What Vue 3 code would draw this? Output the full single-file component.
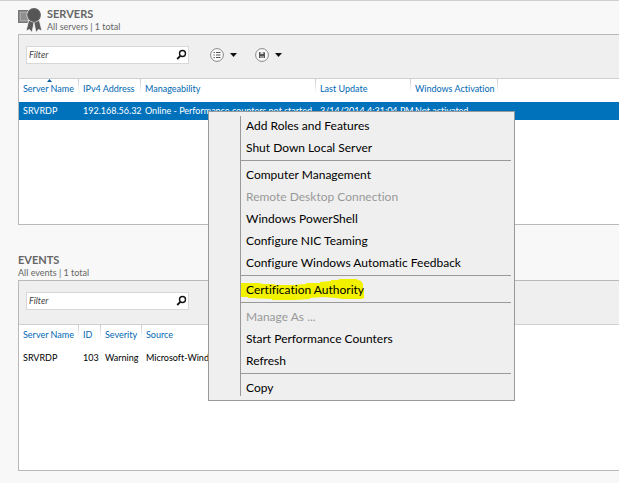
<template>
    <main class="dashboard">
        <section v-for="panel in panels" :key="panel.id" class="group" :class="panel.id">
            <header class="group-header">
                <svg v-if="panel.id === 'servers'" class="group-icon" width="26" height="26" viewBox="0 0 26 26" aria-hidden="true">
                    <rect x="0.5" y="3.5" width="14" height="12" fill="#8a8a8a" stroke="#777" />
                    <rect x="2.5" y="5.5" width="10" height="8" fill="#8f8f8f" stroke="#a8a8a8" />
                    <path d="M11 12L8 24L11.500 22.500L14 25.500L16 16L18 25.500L20.500 22.500L24 24L21 12Z" fill="#5c5c5c" stroke="#f8f8f8" stroke-width="0.800" />
                    <circle cx="16" cy="8" r="7.500" fill="#f8f8f8" />
                    <circle cx="16" cy="8" r="6.300" fill="#555" stroke="#606060" stroke-width="1.200" />
                </svg>
                <div>
                    <h2>{{ panel.title }}</h2>
                    <p>{{ panel.summary }}</p>
                </div>
            </header>

            <div class="panel">
                <div class="toolbar">
                    <form class="filter" @submit.prevent>
                        <input v-model="panel.filter" type="text" placeholder="Filter" :aria-label="'Filter ' + panel.id" />
                        <button type="submit" aria-label="Search">
                            <svg width="11" height="11" viewBox="0 0 11 11" fill="none" stroke="#111">
                                <circle cx="6.500" cy="4.500" r="3" stroke-width="1.400" />
                                <path d="M4.400 6.800L1.200 10" stroke-width="1.800" />
                            </svg>
                        </button>
                    </form>
                    <template v-if="panel.id === 'servers'">
                        <button class="tool" type="button" aria-label="View options">
                            <svg width="28" height="14" viewBox="0 0 28 14">
                                <circle cx="7" cy="7" r="6.400" fill="#fafafa" stroke="#888" />
                                <path d="M3.500 4.500h1.300M3.500 7h1.300M3.500 9.500h1.300M6 4.500h4.500M6 7h4.500M6 9.500h4.500" stroke="#555" stroke-width="1.200" />
                                <path d="M20 5h7l-3.500 4z" fill="#111" />
                            </svg>
                        </button>
                        <button class="tool" type="button" aria-label="Saved queries">
                            <svg width="28" height="14" viewBox="0 0 28 14">
                                <circle cx="7" cy="7" r="6.400" fill="#fafafa" stroke="#888" />
                                <path d="M4 4h5.200l0.800 0.800v5.200h-6z" fill="#555" />
                                <path d="M5.400 4h3v2h-3zM5.500 8h1v2h-1zM7.500 8h1v2h-1z" fill="#ddd" />
                                <path d="M20 5h7l-3.500 4z" fill="#111" />
                            </svg>
                        </button>
                    </template>
                </div>

                <table>
                    <thead>
                        <tr>
                            <th v-for="(column, i) in panel.columns" :key="column" scope="col" :class="panel.widths[i]">
                                <svg v-if="column === panel.sorted" class="sort" width="5" height="3" viewBox="0 0 5 3" aria-hidden="true">
                                    <path d="M0 3L2.500 0L5 3z" fill="#0b5e9c" />
                                </svg>
                                {{ column }}
                            </th>
                            <td></td>
                        </tr>
                    </thead>
                    <tbody>
                        <tr :class="{ selected: panel.selected }">
                            <td v-for="cell in panel.row" :key="cell">{{ cell }}</td>
                            <td></td>
                        </tr>
                    </tbody>
                </table>
            </div>
        </section>

        <div class="context-menu" role="menu">
            <div v-for="(group, i) in menu" :key="i" class="menu-group" role="group">
                <button v-for="item in group" :key="item.label" type="button" role="menuitem" :disabled="item.disabled">
                    <svg v-if="item.marked" class="marker" width="124" height="22" viewBox="0 0 124 22" aria-hidden="true">
                        <path d="M1 4H19L23 5H32L37 6H53L66 5V4H80V3L91 2V1H99V0H116L121 2L123 5V10H124V19L121 20H103L96 19L83 18L70 19V20L55 21H32V20L8 19V18H1Z" fill="#f2f200" />
                    </svg>
                    <span>{{ item.label }}</span>
                </button>
            </div>
        </div>
    </main>
</template>

<script setup>
import { reactive } from 'vue'

const panels = reactive([
    {
        id: 'servers',
        title: 'SERVERS',
        summary: 'All servers | 1 total',
        filter: '',
        sorted: 'Server Name',
        selected: true,
        columns: ['Server Name', 'IPv4 Address', 'Manageability', 'Last Update', 'Windows Activation'],
        widths: ['w-name', 'w-address', 'w-manage', 'w-update', 'w-activation'],
        row: ['SRVRDP', '192.168.56.32', 'Online - Performance counters not started', '3/14/2014 4:31:04 PM', 'Not activated']
    },
    {
        id: 'events',
        title: 'EVENTS',
        summary: 'All events | 1 total',
        filter: '',
        sorted: '',
        selected: false,
        columns: ['Server Name', 'ID', 'Severity', 'Source'],
        widths: ['w-name', 'w-id', 'w-severity', 'w-source'],
        row: ['SRVRDP', '103', 'Warning', 'Microsoft-Wind']
    }
])

const menu = [
    [{ label: 'Add Roles and Features' }, { label: 'Shut Down Local Server' }],
    [
        { label: 'Computer Management' },
        { label: 'Remote Desktop Connection', disabled: true },
        { label: 'Windows PowerShell' },
        { label: 'Configure NIC Teaming' },
        { label: 'Configure Windows Automatic Feedback' }
    ],
    [{ label: 'Certification Authority', marked: true }],
    [{ label: 'Manage As ...', disabled: true }, { label: 'Start Performance Counters' }, { label: 'Refresh' }],
    [{ label: 'Copy' }]
]
</script>

<style>
body {
    background: #f8f8f8;
}
</style>

<style scoped>
.dashboard {
    position: relative;
    overflow: hidden;
    padding: 6px 0 12px 18px;
    border-top: 1px solid #cfcfcf;
    font-family: Lato, "Open Sans", sans-serif;
    font-size: 9px;
    line-height: 12px;
    font-variant-ligatures: none;
    color: #000;
}

.group + .group {
    margin-top: 28px;
}

.group-header {
    display: flex;
    gap: 3px;
    height: 27px;
}

h2,
p {
    margin: 0;
    color: #666;
}

h2 {
    font-size: 11px;
    line-height: 14px;
    font-weight: 700;
}

.panel {
    min-height: 189px;
    border: 1px solid #b9b9b9;
    border-right: 0;
    background: #fff;
}

.toolbar {
    display: flex;
    align-items: center;
    gap: 17px;
    height: 43px;
    padding-left: 7px;
    border-bottom: 1px solid #cfcfcf;
    background: #efefef;
}

.filter {
    display: flex;
    width: 163px;
    height: 18px;
    box-sizing: border-box;
    margin: 0 4px 4px 0;
    border: 1px solid #d8d8d8;
    background: #fff;
}

.filter input {
    flex: 1;
    min-width: 0;
    padding: 0 2px;
    border: 0;
    outline: 0;
    background: none;
    font: italic 9px Lato, "Open Sans", sans-serif;
}

.filter input::placeholder {
    color: #444;
}

button {
    padding: 0;
    border: 0;
    background: none;
    font: inherit;
    font-variant-ligatures: none;
    color: inherit;
}

.filter button {
    display: flex;
    align-items: center;
    padding-right: 1px;
}

.tool {
    display: flex;
    margin-bottom: 4px;
}

table {
    width: 100%;
    border-collapse: collapse;
    table-layout: fixed;
}

th,
td {
    padding: 0 4px;
    text-align: left;
    font-weight: 400;
    white-space: nowrap;
}

th {
    position: relative;
    height: 23px;
    padding-bottom: 4px;
    box-sizing: border-box;
    color: #0068b4;
    background: linear-gradient(#ccc, #fff) right top / 1px 14px no-repeat;
}

tbody td {
    height: 18px;
}

.events tbody td {
    height: 20px;
}

.sort {
    position: absolute;
    top: 0;
    left: 28px;
}

.selected {
    background: #0072bc;
    color: #fff;
}

.w-name {
    width: 60px;
}

.w-address {
    width: 62px;
}

.w-manage {
    width: 175px;
}

.w-update {
    width: 95px;
}

.w-activation {
    width: 87px;
}

.w-id {
    width: 22px;
}

.w-severity {
    width: 41px;
}

.w-source {
    width: 175px;
}

.context-menu {
    position: absolute;
    top: 110px;
    left: 208px;
    width: 307px;
    box-sizing: border-box;
    padding: 3px 3px 1px 31px;
    border: 1px solid #999;
    background: #efefef;
    font-size: 12px;
    line-height: 22px;
}

.context-menu::before {
    content: "";
    position: absolute;
    top: 4px;
    bottom: 4px;
    left: 31px;
    border-left: 1px solid #999;
}

.menu-group + .menu-group::before {
    content: "";
    display: block;
    height: 1px;
    margin: 1px 0 3px;
    background: #999;
}

.menu-group button {
    position: relative;
    display: block;
    width: 100%;
    height: 22px;
    padding-left: 6px;
    text-align: left;
}

.menu-group button:disabled {
    color: #999;
}

.menu-group span {
    position: relative;
}

.marker {
    position: absolute;
    top: 0;
    left: 0;
}
</style>
